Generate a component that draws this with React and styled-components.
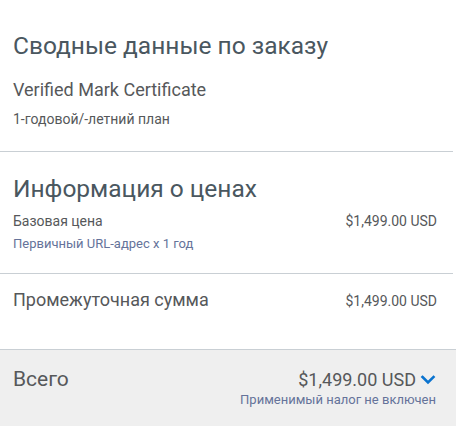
import React from 'react';
import styled, { createGlobalStyle } from 'styled-components';

const GlobalStyle = createGlobalStyle`
  body {
    margin: 0;
    background: #fff;
    font-family: Roboto, "Noto Sans", Arial, sans-serif;
    color: #555;
  }
`;

const Summary = styled.div`
  width: 457px;
`;

const Section = styled.section`
  width: 453px;
  box-sizing: border-box;
  padding: ${(p) => p.pad};
  border-bottom: ${(p) => (p.last ? 'none' : '1px solid #c9cfd4')};
`;

const Heading = styled.h2`
  margin: 0;
  font-size: 24.5px;
  font-weight: 400;
  line-height: 28px;
  color: #4a575f;
`;

const Product = styled.div`
  margin-top: 19px;
  font-size: 18px;
  line-height: 22px;
  color: #56585a;
`;

const Plan = styled.div`
  margin-top: 10px;
  font-size: 14px;
  line-height: 16px;
  color: #56585a;
`;

const Row = styled.div`
  display: flex;
  justify-content: space-between;
  align-items: baseline;
  margin-top: ${(p) => p.top || '0px'};
`;

const Label = styled.span`
  font-size: ${(p) => p.size || '14px'};
  line-height: 20px;
  color: #56585a;
`;

const Price = styled.span`
  font-size: ${(p) => p.size || '14px'};
  color: #56585a;
  display: inline-flex;
  align-items: center;
  gap: 4px;
`;

const Note = styled.div`
  margin-top: ${(p) => p.top || '5px'};
  font-size: 13px;
  line-height: 16px;
  color: #65739a;
`;

const Total = styled.div`
  width: 456px;
  box-sizing: border-box;
  background: #efefef;
  border-top: 1px solid #c9cfd4;
  padding: 19px 20px 25px 13px;
  display: flex;
  justify-content: space-between;
  align-items: flex-start;
`;

const TotalRight = styled.div`
  display: flex;
  flex-direction: column;
  align-items: flex-end;
`;

const Chevron = () => (
  <svg width="16" height="16" viewBox="0 0 16 16" aria-hidden="true">
    <path d="M2.5 5 L8 10.5 L13.5 5" fill="none" stroke="#0a73cf" strokeWidth="2.6" strokeLinecap="square" />
  </svg>
);

export default function App() {
  return (
    <>
      <GlobalStyle />
      <Summary>
        <Section pad="32px 16px 24px 13px">
          <Heading>Сводные данные по заказу</Heading>
          <Product>Verified Mark Certificate</Product>
          <Plan>1-годовой/-летний план</Plan>
        </Section>
        <Section pad="23px 16px 21px 13px">
          <Heading>Информация о ценах</Heading>
          <Row top="8px">
            <Label>Базовая цена</Label>
            <Price>$1,499.00 USD</Price>
          </Row>
          <Note>Первичный URL-адрес x 1 год</Note>
        </Section>
        <Section last pad="16px 16px 39px 13px">
          <Row>
            <Label size="18px">Промежуточная сумма</Label>
            <Price>$1,499.00 USD</Price>
          </Row>
        </Section>
        <Total>
          <Label size="21px">Всего</Label>
          <TotalRight>
            <Price size="18px">$1,499.00 USD<Chevron /></Price>
            <Note top="2px">Применимый налог не включен</Note>
          </TotalRight>
        </Total>
      </Summary>
    </>
  );
}
